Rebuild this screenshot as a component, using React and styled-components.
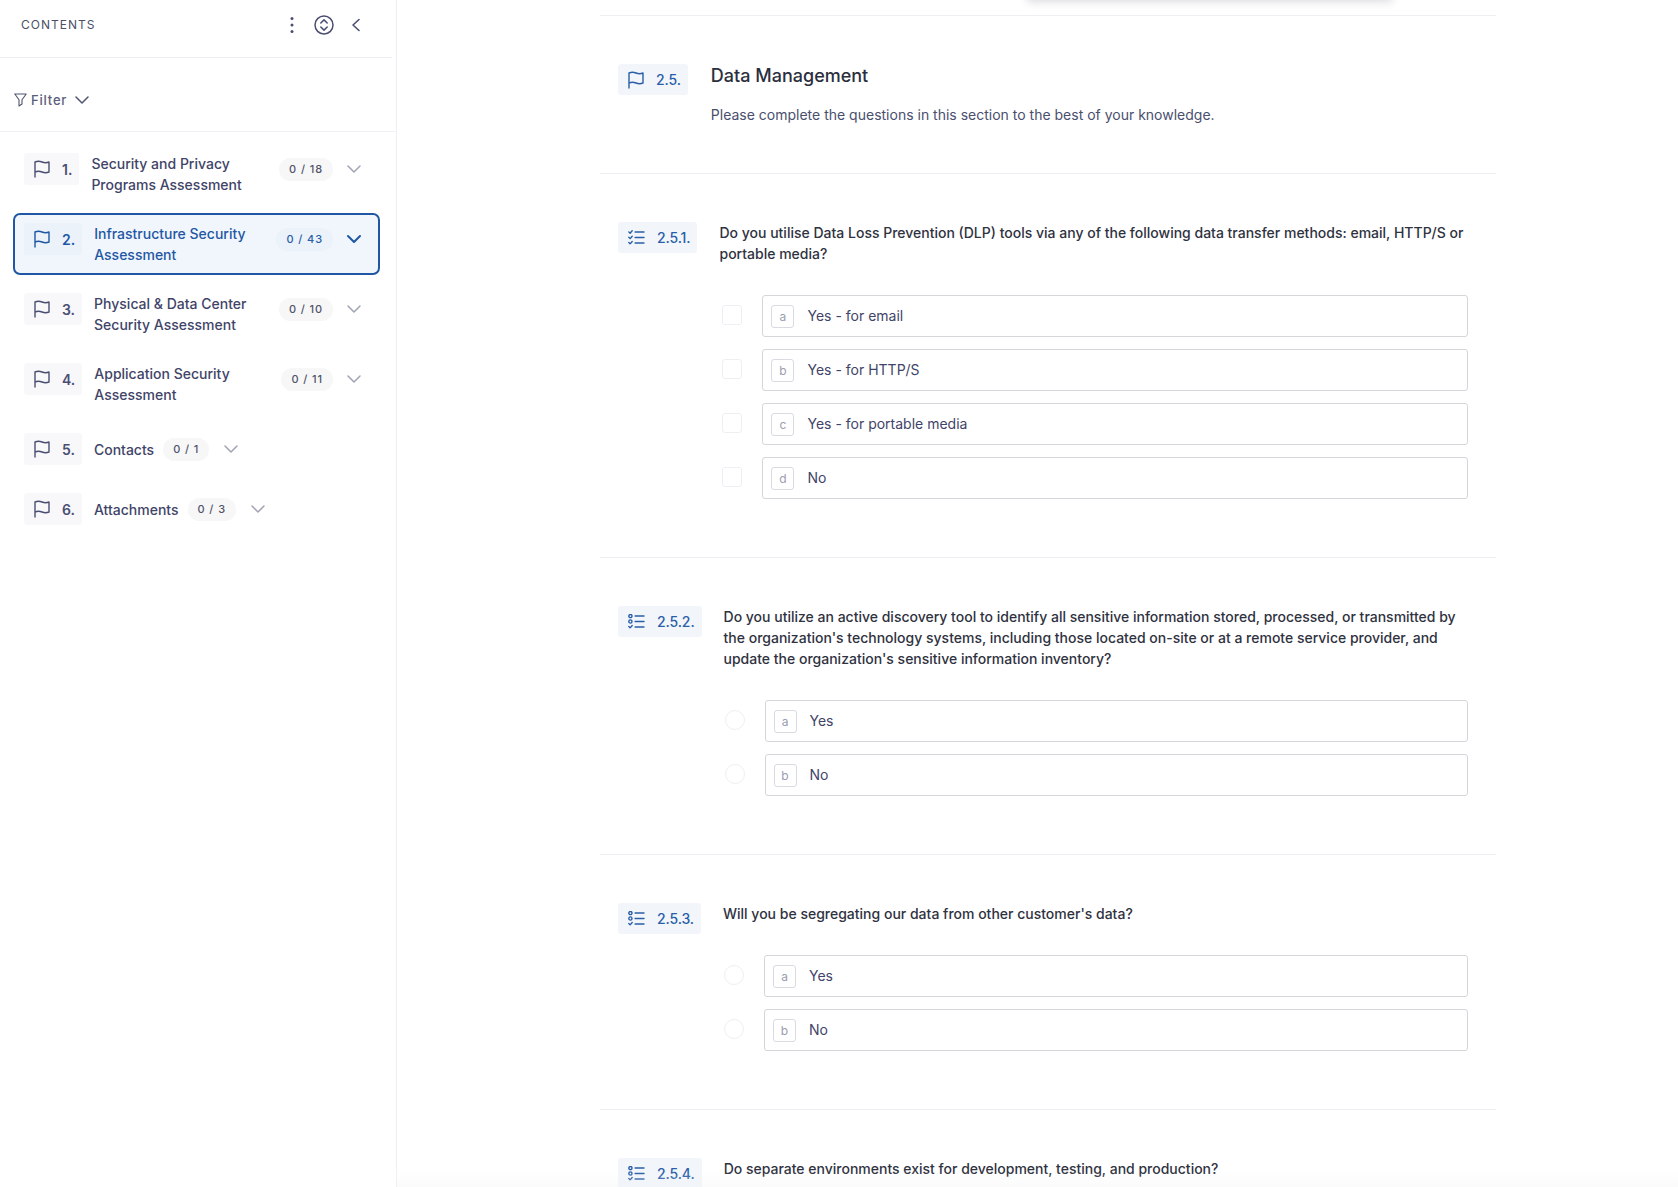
import React from "react";
import styled, { createGlobalStyle } from "styled-components";

const GlobalStyle = createGlobalStyle`
  html, body, #root {
    margin: 0;
    height: 100%;
    overflow: hidden;
    background: #fff;
  }
  body {
    font-family: Inter, "Liberation Sans", sans-serif;
    color: #3c4161;
  }
`;

const Page = styled.div`
  display: flex;
  height: 100%;
  overflow: hidden;
  position: relative;
`;

const Sidebar = styled.aside`
  width: 397px;
  flex: none;
  border-right: 1px solid #eff0f3;
  box-sizing: border-box;
  height: 100%;
`;

const SideHeader = styled.div`
  height: 58px;
  margin-right: 4px;
  box-sizing: border-box;
  border-bottom: 1px solid #edeef1;
  padding: 0 29px 8px 21px;
  display: flex;
  align-items: center;
`;

const ContentsLabel = styled.div`
  flex: 1;
  font-size: 12px;
  letter-spacing: 1px;
  color: #4b4f66;
`;

const HeaderIcons = styled.div`
  display: flex;
  align-items: center;
  gap: 15px;
  color: #4a4f72;
`;

const FilterRow = styled.div`
  height: 74px;
  box-sizing: border-box;
  border-bottom: 1px solid #f0f1f4;
  padding: 10px 0 0 14px;
  display: flex;
  align-items: center;
  color: #4f5470;
`;

const FilterText = styled.span`
  font-size: 13px;
  font-weight: 500;
  letter-spacing: 0.8px;
  margin: 0 8px 0 4px;
  color: #5a5e78;
`;

const ItemList = styled.div`
  display: flex;
  flex-direction: column;
  gap: 8px;
  padding: 11px 0 0 13px;
  width: 367px;
`;

const Item = styled.div`
  display: flex;
  align-items: flex-start;
  box-sizing: border-box;
  min-height: ${(p) => (p.$short ? "52px" : "62px")};
  padding: 8px 17px 8px 9px;
  border: 2px solid ${(p) => (p.$active ? "#1f57a4" : "transparent")};
  border-radius: 7px;
  background: ${(p) => (p.$active ? "#f1f6fc" : "transparent")};
  color: ${(p) => (p.$active ? "#1f57a4" : "#3f4468")};
`;

const NumChip = styled.div`
  display: flex;
  align-items: center;
  gap: 12px;
  height: 32px;
  padding: 0 7px 0 10px;
  flex: none;
  border-radius: 3px;
  background: ${(p) => (p.$active ? "#ebf2fa" : "#f8f8fa")};
  font-size: 14px;
  font-weight: 600;
  color: ${(p) => (p.$active ? "#1f57a4" : "#4a4f72")};
`;

const ItemTitle = styled.div`
  margin-left: 12px;
  font-size: 14px;
  font-weight: 500;
  line-height: 21px;
  ${(p) => (p.$grow ? "flex: 1;" : "margin-top: 6px;")}
`;

const Badge = styled.div`
  flex: none;
  height: 23px;
  margin: 5px 0 0 ${(p) => (p.$grow ? "0" : "9px")};
  padding: 0 10px;
  border-radius: 12px;
  background: ${(p) => (p.$active ? "#ebf2fa" : "#f7f7f8")};
  font-size: 11px;
  font-weight: 500;
  letter-spacing: 0.9px;
  line-height: 23px;
  color: ${(p) => (p.$active ? "#2a5ea8" : "#50546a")};
`;

const Chevron = styled.div`
  flex: none;
  margin: 6px 0 0 ${(p) => (p.$grow ? "14px" : "15px")};
  height: 20px;
  color: ${(p) => (p.$active ? "#1f57a4" : "#a0a3b3")};
`;

const Main = styled.main`
  flex: 1;
  padding: 15px 0 0 203px;
  min-width: 0;
`;

const Column = styled.div`
  width: 896px;
`;

const Section = styled.section`
  display: flex;
  align-items: flex-start;
  border-top: 1px solid #eeeff2;
  padding: 48px 28px ${(p) => (p.$intro ? "48px" : "58px")} 18px;
`;

const RefChip = styled.div`
  display: flex;
  align-items: center;
  gap: 12px;
  flex: none;
  height: 31px;
  padding: 0 7px 0 10px;
  border-radius: 3px;
  background: #f2f6fb;
  font-size: 14px;
  font-weight: 500;
  letter-spacing: -0.1px;
  color: #2a5ea8;
  svg {
    flex: none;
  }
`;

const Body = styled.div`
  flex: 1;
  margin-left: ${(p) => (p.$intro ? "23px" : "22px")};
  min-width: 0;
`;

const SectionTitle = styled.h2`
  margin: 0;
  font-size: 18px;
  font-weight: 500;
  line-height: 24px;
  color: #2b2e3d;
`;

const SectionDesc = styled.p`
  margin: 16px 0 0;
  font-size: 14px;
  line-height: 21px;
  color: #4a4f6e;
`;

const Question = styled.div`
  font-size: 14px;
  font-weight: 500;
  line-height: 21px;
  color: #2f3240;
`;

const Options = styled.div`
  display: flex;
  flex-direction: column;
  gap: 12px;
  margin-top: 31px;
`;

const OptionRow = styled.div`
  display: flex;
  align-items: flex-start;
  gap: 20px;
`;

const Marker = styled.div`
  flex: none;
  width: 20px;
  height: 20px;
  margin: 10px 0 0 ${(p) => (p.$round ? "1px" : "3px")};
  box-sizing: border-box;
  border: 1px solid #eeeff2;
  border-radius: ${(p) => (p.$round ? "50%" : "3px")};
  background: #fff;
`;

const OptionBox = styled.div`
  flex: 1;
  display: flex;
  align-items: center;
  gap: 13px;
  height: 42px;
  box-sizing: border-box;
  padding: 0 8px;
  border: 1px solid #d5d6da;
  border-radius: 3px;
  font-size: 14px;
  color: #3f4468;
`;

const OptionLabel = styled.span`
  padding-bottom: 2px;
`;

const LetterBox = styled.span`
  flex: none;
  width: 23px;
  height: 23px;
  box-sizing: border-box;
  border: 1px solid #d9dae2;
  border-radius: 3px;
  display: flex;
  align-items: center;
  justify-content: center;
  font-size: 12px;
  color: #9a9db0;
`;

// bit of a popup poking in from above the top edge
const TopPopup = styled.div`
  position: absolute;
  top: -20px;
  left: 1027px;
  width: 365px;
  height: 20px;
  box-shadow: 0 2px 8px rgba(30, 35, 60, 0.16);
`;

const BottomFade = styled.div`
  position: absolute;
  left: 397px;
  right: 0;
  bottom: 0;
  height: 16px;
  background: linear-gradient(to bottom, rgba(240, 241, 244, 0), rgba(240, 241, 244, 0.3));
`;

const FlagIcon = () => (
  <svg width="16" height="18" viewBox="0 0 16 18" fill="none" stroke="currentColor" strokeWidth="1.4" strokeLinejoin="round" strokeLinecap="round">
    <path d="M1 17V2c2.300-1 4.700-1 7 0s4.700 1 7 0v10c-2.300 1-4.700 1-7 0s-4.700-1-7 0" />
  </svg>
);

const ChecksIcon = () => (
  <svg width="17" height="15" viewBox="0 0 18 16" fill="none" stroke="currentColor" strokeWidth="1.5" strokeLinecap="round" strokeLinejoin="round">
    <path d="M.8 2l1.400 1.400L4.400.8M.8 7.800l1.400 1.400 2.200-2.600M.8 13.400l1.400 1.400 2.200-2.600" />
    <path d="M7.500 2.200h9.500M7.500 8h9.500M7.500 13.800h9.500" />
  </svg>
);

const RadioListIcon = () => (
  <svg width="17" height="15" viewBox="0 0 18 16" fill="none" stroke="currentColor" strokeWidth="1.5" strokeLinecap="round" strokeLinejoin="round">
    <circle cx="2.500" cy="2.200" r="1.700" />
    <circle cx="2.500" cy="8" r="1.700" />
    <path d="M.8 13.400l1.400 1.400 2.200-2.600" />
    <path d="M7.500 2.200h9.500M7.500 8h9.500M7.500 13.800h9.500" />
  </svg>
);

const ChevronDown = ({ bold }) => (
  <svg width="14" height="20" viewBox="0 0 14 20" fill="none" stroke="currentColor" strokeWidth={bold ? 2 : 1.5} strokeLinecap="round" strokeLinejoin="round">
    <path d="M1 7l6 6 6-6" />
  </svg>
);

const sections = [
  { num: "1.", title: ["Security and Privacy", "Programs Assessment"], count: "0 / 18" },
  { num: "2.", title: ["Infrastructure Security", "Assessment"], count: "0 / 43", active: true },
  { num: "3.", title: ["Physical & Data Center", "Security Assessment"], count: "0 / 10" },
  { num: "4.", title: ["Application Security", "Assessment"], count: "0 / 11" },
  { num: "5.", title: ["Contacts"], count: "0 / 1" },
  { num: "6.", title: ["Attachments"], count: "0 / 3" },
];

const questions = [
  {
    ref: "2.5.1.",
    multi: true,
    text: (
      <>
        Do you utilise Data Loss Prevention (DLP) tools via any of the following data transfer methods: email, HTTP/S or
        <br />
        portable media?
      </>
    ),
    options: ["Yes - for email", "Yes - for HTTP/S", "Yes - for portable media", "No"],
  },
  {
    ref: "2.5.2.",
    text: (
      <>
        Do you utilize an active discovery tool to identify all sensitive information stored, processed, or transmitted by
        <br />
        the organization's technology systems, including those located on-site or at a remote service provider, and
        <br />
        update the organization's sensitive information inventory?
      </>
    ),
    options: ["Yes", "No"],
  },
  {
    ref: "2.5.3.",
    text: "Will you be segregating our data from other customer's data?",
    options: ["Yes", "No"],
  },
  {
    ref: "2.5.4.",
    text: "Do separate environments exist for development, testing, and production?",
    options: [],
  },
];

const SideItem = ({ num, title, count, active }) => {
  const grow = title.length > 1;
  return (
    <Item $active={active} $short={!grow}>
      <NumChip $active={active}>
        <FlagIcon />
        {num}
      </NumChip>
      <ItemTitle $grow={grow}>
        {title.map((line) => (
          <div key={line}>{line}</div>
        ))}
      </ItemTitle>
      <Badge $active={active} $grow={grow}>
        {count}
      </Badge>
      <Chevron $active={active} $grow={grow}>
        <ChevronDown bold={active} />
      </Chevron>
    </Item>
  );
};

const App = () => {
  return (
    <Page>
      <GlobalStyle />
      <Sidebar>
        <SideHeader>
          <ContentsLabel>CONTENTS</ContentsLabel>
          <HeaderIcons>
            <svg width="14" height="20" viewBox="0 0 14 20" fill="currentColor">
              <circle cx="7" cy="3.500" r="1.500" />
              <circle cx="7" cy="10" r="1.500" />
              <circle cx="7" cy="16.500" r="1.500" />
            </svg>
            <svg width="20" height="20" viewBox="0 0 20 20" fill="none" stroke="currentColor" strokeWidth="1.500" strokeLinecap="round" strokeLinejoin="round">
              <circle cx="10" cy="10" r="9" />
              <path d="M6.800 8L10 4.900 13.200 8M6.800 12l3.200 3.100 3.200-3.100" />
            </svg>
            <svg width="14" height="20" viewBox="0 0 14 20" fill="none" stroke="currentColor" strokeWidth="1.600" strokeLinecap="round" strokeLinejoin="round">
              <path d="M10 4.500L4 10l6 5.500" />
            </svg>
          </HeaderIcons>
        </SideHeader>
        <FilterRow>
          <svg width="13" height="14" viewBox="0 0 13 14" fill="none" stroke="currentColor" strokeWidth="1.100" strokeLinejoin="round">
            <path d="M.8 1h11.400L8 6.800V11l-3 2V6.800z" />
          </svg>
          <FilterText>Filter</FilterText>
          <ChevronDown />
        </FilterRow>
        <ItemList>
          {sections.map((s) => (
            <SideItem key={s.num} {...s} />
          ))}
        </ItemList>
      </Sidebar>
      <Main>
        <Column>
          <Section $intro>
            <RefChip>
              <FlagIcon />
              2.5.
            </RefChip>
            <Body $intro>
              <SectionTitle>Data Management</SectionTitle>
              <SectionDesc>Please complete the questions in this section to the best of your knowledge.</SectionDesc>
            </Body>
          </Section>
          {questions.map((q) => (
            <Section key={q.ref}>
              <RefChip>
                {q.multi ? <ChecksIcon /> : <RadioListIcon />}
                {q.ref}
              </RefChip>
              <Body>
                <Question>{q.text}</Question>
                {q.options.length > 0 && (
                  <Options>
                    {q.options.map((opt, i) => (
                      <OptionRow key={opt}>
                        <Marker $round={!q.multi} />
                        <OptionBox>
                          <LetterBox>{"abcd"[i]}</LetterBox>
                          <OptionLabel>{opt}</OptionLabel>
                        </OptionBox>
                      </OptionRow>
                    ))}
                  </Options>
                )}
              </Body>
            </Section>
          ))}
        </Column>
      </Main>
      <TopPopup />
      <BottomFade />
    </Page>
  );
};

export default App;
